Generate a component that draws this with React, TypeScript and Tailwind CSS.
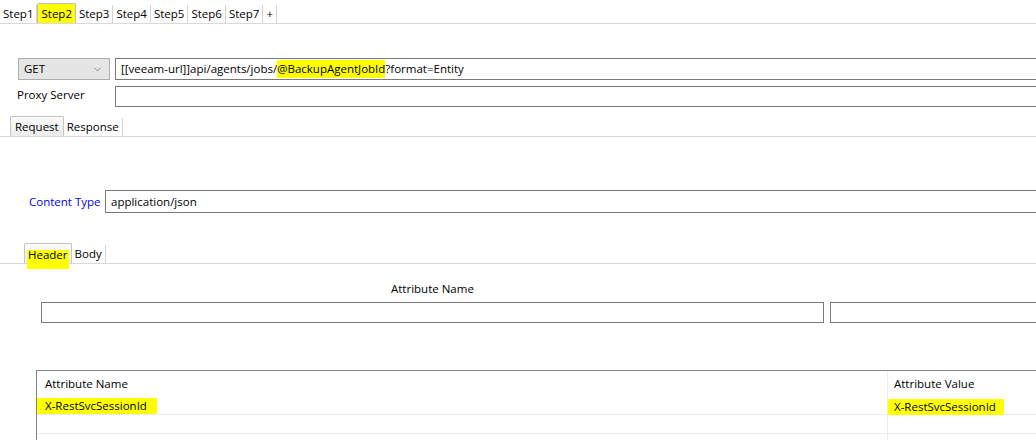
import { ChevronDown } from 'lucide-react';

const steps = ['Step1', 'Step2', 'Step3', 'Step4', 'Step5', 'Step6', 'Step7', '+'];

export default function App() {
    return (
        <div className="w-[1036px] h-[440px] overflow-hidden bg-white text-[11.5px] text-black font-['Open_Sans','Noto_Sans',sans-serif]">
            {/* Steps */}
            <div className="h-[24px] pt-[3px] border-b border-[#d9d9d9] flex items-end">
                <div className="flex items-end">
                    {steps.map((s, i) =>
                        i === 1 ? (
                            <div key={s} className="h-[20px] px-[3px] bg-[#ffff00] border border-b-0 border-[#bcbcbc] rounded-t-[2px] leading-[20px]">
                                {s}
                            </div>
                        ) : (
                            <div key={s} className="h-[18px] px-[3px] border-r border-[#d4d4d4] leading-[18px]">
                                {s}
                            </div>
                        )
                    )}
                </div>
            </div>

            {/* URL row */}
            <div className="mt-[34px] pl-[18px] flex items-center gap-[5px]">
                <div className="shrink-0 w-[92px] h-[22px] bg-[#e5e5e5] border border-[#adadad] flex items-center justify-between pl-[5px] pr-[6px]">
                    <span>GET</span>
                    <ChevronDown className="w-[11px] h-[11px] text-[#606060]" strokeWidth={1.5} />
                </div>
                <div className="shrink-0 w-[940px] h-[22px] border border-r-0 border-[#7a7a7a] flex items-center pl-[5px] whitespace-nowrap">
                    <span>[[veeam-url]]api/agents/jobs/</span>
                    <span className="bg-[#ffff00]">@BackupAgentJobId</span>
                    <span>?format=Entity</span>
                </div>
            </div>

            {/* Proxy */}
            <div className="mt-[6px] flex items-center">
                <div className="shrink-0 w-[115px] pl-[17px] -mt-[3px]">Proxy Server</div>
                <div className="shrink-0 w-[940px] h-[21px] border border-r-0 border-[#7a7a7a]" />
            </div>

            {/* Request / Response */}
            <div className="mt-[10px] pl-[10px] border-b border-[#d9d9d9] flex items-end h-[20px]">
                <div className="h-[20px] px-[4px] border border-b-0 border-[#c4c4c4] rounded-t-[2px] bg-gradient-to-b from-[#fafafa] to-[#ececec] leading-[20px]">
                    Request
                </div>
                <div className="h-[18px] px-[3px] border-r border-[#d4d4d4] leading-[18px]">Response</div>
            </div>

            {/* Content type */}
            <div className="mt-[53px] flex items-center">
                <div className="shrink-0 w-[105px] pl-[29px] text-[#0000ff]">Content Type</div>
                <div className="shrink-0 w-[940px] h-[23px] border border-r-0 border-[#7a7a7a] flex items-center pl-[5px]">
                    application/json
                </div>
            </div>

            {/* Header / Body */}
            <div className="mt-[31px] pl-[24px] border-b border-[#d9d9d9] flex items-end h-[20px]">
                <div className="h-[20px] px-[3px] border border-b-0 border-[#c4c4c4] rounded-t-[2px] bg-gradient-to-b from-[#fafafa] to-[#ececec] leading-[22px]">
                    <span className="relative">
                        <span className="absolute left-[-1px] right-[-1px] top-[3px] h-[19px] bg-[#ffff00]" />
                        <span className="relative">Header</span>
                    </span>
                </div>
                <div className="h-[18px] px-[3px] border-r border-[#d4d4d4] leading-[18px]">Body</div>
            </div>

            {/* Attribute inputs */}
            <div className="mt-[17px] pl-[391px] leading-[16px]">Attribute Name</div>
            <div className="mt-[5px] pl-[41px] flex gap-[6px]">
                <div className="shrink-0 w-[783px] h-[21px] border border-[#7a7a7a]" />
                <div className="shrink-0 w-[220px] h-[21px] border border-r-0 border-[#7a7a7a]" />
            </div>

            {/* Table */}
            <div className="mt-[47px] ml-[36px] w-[1010px] border-t border-l border-[#828282]">
                <div className="grid grid-cols-[850px_1fr]">
                    <div className="h-[26px] pl-[8px] flex items-center">Attribute Name</div>
                    <div className="h-[26px] pl-[6px] flex items-center border-l border-[#eeeeee]">Attribute Value</div>
                    <div className="h-[18px] border-b border-[#ececec] flex items-center">
                        <span className="bg-[#ffff00] pl-[8px] pr-[10px] h-[16px] leading-[16px]">X-RestSvcSessionId</span>
                    </div>
                    <div className="h-[18px] border-b border-l border-[#ececec] flex items-center">
                        <span className="bg-[#ffff00] pl-[6px] pr-[8px] h-[16px] leading-[16px] mt-[3px]">X-RestSvcSessionId</span>
                    </div>
                    <div className="h-[19px] border-b border-[#ececec]" />
                    <div className="h-[19px] border-b border-l border-[#ececec]" />
                    <div className="h-[19px]" />
                    <div className="h-[19px] border-l border-[#ececec]" />
                </div>
            </div>
        </div>
    );
}
